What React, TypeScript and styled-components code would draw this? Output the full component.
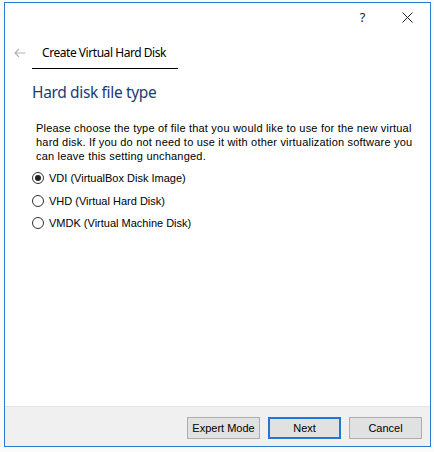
import styled, { createGlobalStyle } from 'styled-components';

const GlobalStyle = createGlobalStyle`
	html, body {
		margin: 0;
		padding: 0;
		background: #fbfbfb;
	}
	* {
		box-sizing: border-box;
	}
`;

const Window = styled.div`
	margin: 2px 0 0 4px;
	width: 427px;
	height: 445px;
	border: 1px solid #2b7ad0;
	background: #ffffff;
	display: flex;
	flex-direction: column;
	font-family: 'Liberation Sans', Arial, sans-serif;
	color: #000;
`;

const TitleBar = styled.div`
	height: 28px;
	display: flex;
	justify-content: flex-end;
	align-items: center;
`;

const TitleButton = styled.div`
	width: 45px;
	height: 28px;
	display: flex;
	align-items: center;
	justify-content: center;
	font-family: 'Noto Sans', sans-serif;
	font-size: 13px;
	color: #222;
`;

const Header = styled.div`
	display: flex;
	align-items: flex-start;
	padding: 14px 0 0 9px;
`;

const BackArrow = styled.div`
	width: 14px;
	height: 16px;
	display: flex;
	align-items: center;
	color: #b4b4b4;
`;

const Tab = styled.div`
	margin-left: 4px;
	padding: 0 10px 7px;
	width: 146px;
	font-family: 'Noto Sans', sans-serif;
	font-size: 12px;
	letter-spacing: -0.45px;
	line-height: 16px;
	border-bottom: 1px solid #000;
	white-space: nowrap;
`;

const Heading = styled.h2`
	margin: 13px 0 0 27px;
	font-family: 'Noto Sans', sans-serif;
	font-weight: normal;
	font-size: 15.5px;
	letter-spacing: -0.35px;
	line-height: 20px;
	color: #1d3b74;
`;

const Body = styled.div`
	padding: 0 16px 0 30px;
	margin-top: 19px;
`;

const Description = styled.p`
	margin: 0 0 0 1px;
	font-size: 11px;
	letter-spacing: 0.2px;
	line-height: 14px;
`;

const RadioList = styled.div`
	margin: 4px 0 0 -3px;
	display: flex;
	flex-direction: column;
`;

const RadioRow = styled.label`
	height: 22.5px;
	display: flex;
	align-items: center;
	gap: 5px;
	font-size: 11px;
`;

const RadioCircle = styled.span<{ $checked?: boolean }>`
	width: 12px;
	height: 12px;
	border-radius: 50%;
	border: 1px solid #333;
	background: #fff;
	display: flex;
	align-items: center;
	justify-content: center;
	&::after {
		content: '';
		width: 6px;
		height: 6px;
		border-radius: 50%;
		background: ${({ $checked }) => ($checked ? '#222' : 'transparent')};
	}
`;

const Spacer = styled.div`
	flex: 1;
`;

const Footer = styled.div`
	height: 40px;
	background: #f0f0f0;
	border-top: 1px solid #e6e6e6;
	display: flex;
	justify-content: flex-end;
	align-items: flex-start;
	gap: 8px;
	padding: 10px 8px 0 0;
`;

const Button = styled.button<{ $primary?: boolean }>`
	width: 73px;
	height: 22px;
	padding: 0;
	background: #e1e1e1;
	border: ${({ $primary }) => ($primary ? '2px solid #1f78d1' : '1px solid #adadad')};
	font-family: 'Liberation Sans', Arial, sans-serif;
	font-size: 11px;
	color: #000;
`;

const options = [
	{ label: 'VDI (VirtualBox Disk Image)', checked: true },
	{ label: 'VHD (Virtual Hard Disk)', checked: false },
	{ label: 'VMDK (Virtual Machine Disk)', checked: false },
];

export default function App() {
	return (
		<>
			<GlobalStyle />
			<Window>
				<TitleBar>
					<TitleButton>?</TitleButton>
					<TitleButton>
						<svg width='11' height='11' viewBox='0 0 11 11'>
							<path d='M0.5 0.5 L10.5 10.5 M10.5 0.5 L0.5 10.5' stroke='#222' strokeWidth='1' />
						</svg>
					</TitleButton>
				</TitleBar>
				<Header>
					<BackArrow>
						<svg width='12' height='10' viewBox='0 0 12 10'>
							<path d='M11.5 5 H1 M5 1 L1 5 L5 9' stroke='currentColor' strokeWidth='1.2' fill='none' />
						</svg>
					</BackArrow>
					<Tab>Create Virtual Hard Disk</Tab>
				</Header>
				<Heading>Hard disk file type</Heading>
				<Body>
					<Description>
						Please choose the type of file that you would like to use for the new virtual hard disk. If you do
						not need to use it with other virtualization software you can leave this setting unchanged.
					</Description>
					<RadioList>
						{options.map((o) => (
							<RadioRow key={o.label}>
								<RadioCircle $checked={o.checked} />
								{o.label}
							</RadioRow>
						))}
					</RadioList>
				</Body>
				<Spacer />
				<Footer>
					<Button>Expert Mode</Button>
					<Button $primary>Next</Button>
					<Button>Cancel</Button>
				</Footer>
			</Window>
		</>
	);
}
